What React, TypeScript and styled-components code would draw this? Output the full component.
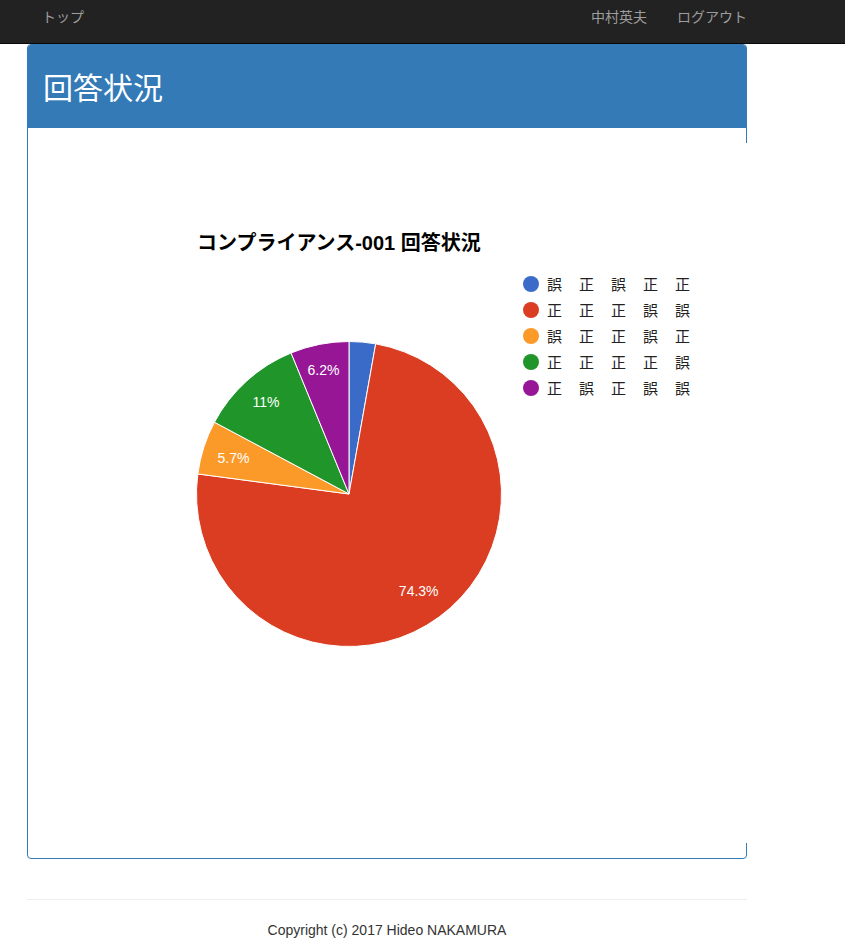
import styled, { createGlobalStyle } from "styled-components";

const GlobalStyle = createGlobalStyle`
  body {
    margin: 0;
    background: #fff;
    color: #333;
    font-family: "Liberation Sans", "Noto Sans CJK JP", sans-serif;
    font-size: 14px;
    line-height: 20px;
  }
`;

const Navbar = styled.nav`
  background: #222;
  border-bottom: 1px solid #080808;
  height: 43px;
`;

const Container = styled.div`
  width: 750px;
  margin-left: 12px;
  padding: 0 15px;
  box-sizing: border-box;
`;

const NavInner = styled(Container)`
  display: flex;
  justify-content: space-between;
  align-items: flex-start;
`;

const NavLink = styled.a`
  display: block;
  padding: 6px 15px 8px;
  color: #9d9d9d;
  font-family: "Noto Sans CJK JP", sans-serif;
  font-size: 14px;
  line-height: 20px;
  text-decoration: none;
`;

const NavRight = styled.div`
  display: flex;
  margin-right: -15px;
`;

const Panel = styled.section`
  border: 1px solid #337ab7;
  border-radius: 4px;
`;

const PanelHeading = styled.div`
  background: #337ab7;
  color: #fff;
  padding: 22px 15px 23px;
  border-radius: 3px 3px 0 0;
`;

const PanelTitle = styled.h1`
  margin: 0;
  font-family: "Noto Sans CJK JP", sans-serif;
  font-weight: 400;
  font-size: 30px;
  line-height: 38px;
`;

const PanelBody = styled.div`
  padding: 15px;
`;

const Chart = styled.svg`
  display: block;
  overflow: visible;
`;

const Footer = styled.footer`
  text-align: center;
`;

const Rule = styled.hr`
  margin: 40px 0 20px;
  border: 0;
  border-top: 1px solid #eee;
`;

type Slice = { label: string; value: number; color: string; pos?: [number, number] };

const slices: Slice[] = [
  { label: "2.8%", value: 2.8, color: "#3a6bc9" },
  { label: "74.3%", value: 74.3, color: "#db3d22", pos: [375.7, 448] },
  { label: "5.7%", value: 5.7, color: "#fb9a28", pos: [190.5, 314.5] },
  { label: "11%", value: 11, color: "#20962a", pos: [223, 259] },
  { label: "6.2%", value: 6.2, color: "#961696", pos: [280.5, 227] },
];

// 凡例: 各回答パターン
const legend = [
  "誤正誤正正",
  "正正正誤誤",
  "誤正正誤正",
  "正正正正誤",
  "正誤正誤誤",
];

const CX = 306;
const CY = 351;
const R = 152.5;

function point(frac: number) {
  const a = frac * Math.PI * 2;
  return [CX + R * Math.sin(a), CY - R * Math.cos(a)];
}

function PieChart() {
  let acc = 0;
  const paths = slices.map((s) => {
    const from = acc / 100;
    acc += s.value;
    const to = acc / 100;
    const [x1, y1] = point(from);
    const [x2, y2] = point(to);
    const large = to - from > 0.5 ? 1 : 0;
    return {
      ...s,
      d: `M${CX},${CY} L${x1},${y1} A${R},${R} 0 ${large} 1 ${x2},${y2} Z`,
    };
  });

  return (
    <Chart width={720} height={700} viewBox="0 0 720 700">
      <rect x={0} y={0} width={720} height={700} fill="#fff" />
      <text
        x={154}
        y={107}
        fontFamily='"Liberation Sans", "Noto Sans CJK JP", sans-serif'
        fontSize={20}
        fontWeight={700}
        fill="#000"
      >
        コンプライアンス-001 回答状況
      </text>
      {paths.map((p) => (
        <path key={p.color} d={p.d} fill={p.color} stroke="#fff" strokeWidth={1} />
      ))}
      {paths.map((p) =>
        p.pos ? (
          <text
            key={p.label}
            x={p.pos[0]}
            y={p.pos[1]}
            textAnchor="middle"
            dominantBaseline="central"
            fontFamily='"Liberation Sans", sans-serif'
            fontSize={14}
            fill="#fff"
          >
            {p.label}
          </text>
        ) : null
      )}
      {legend.map((row, i) => {
        const cy = 141 + i * 26;
        return (
          <g key={i}>
            <circle cx={488} cy={cy} r={8} fill={slices[i].color} />
            {row.split("").map((ch, j) => (
              <text
                key={j}
                x={504 + j * 32}
                y={cy - 1}
                dominantBaseline="central"
                fontFamily='"Noto Sans CJK JP", sans-serif'
                fontSize={15}
                fill="#222"
              >
                {ch}
              </text>
            ))}
          </g>
        );
      })}
    </Chart>
  );
}

export default function App() {
  return (
    <>
      <GlobalStyle />
      <Navbar>
        <NavInner>
          <NavLink href="#">トップ</NavLink>
          <NavRight>
            <NavLink href="#">中村英夫</NavLink>
            <NavLink href="#">ログアウト</NavLink>
          </NavRight>
        </NavInner>
      </Navbar>
      <Container>
        <Panel>
          <PanelHeading>
            <PanelTitle>回答状況</PanelTitle>
          </PanelHeading>
          <PanelBody>
            <PieChart />
          </PanelBody>
        </Panel>
        <Footer>
          <Rule />
          Copyright (c) 2017 Hideo NAKAMURA
        </Footer>
      </Container>
    </>
  );
}
